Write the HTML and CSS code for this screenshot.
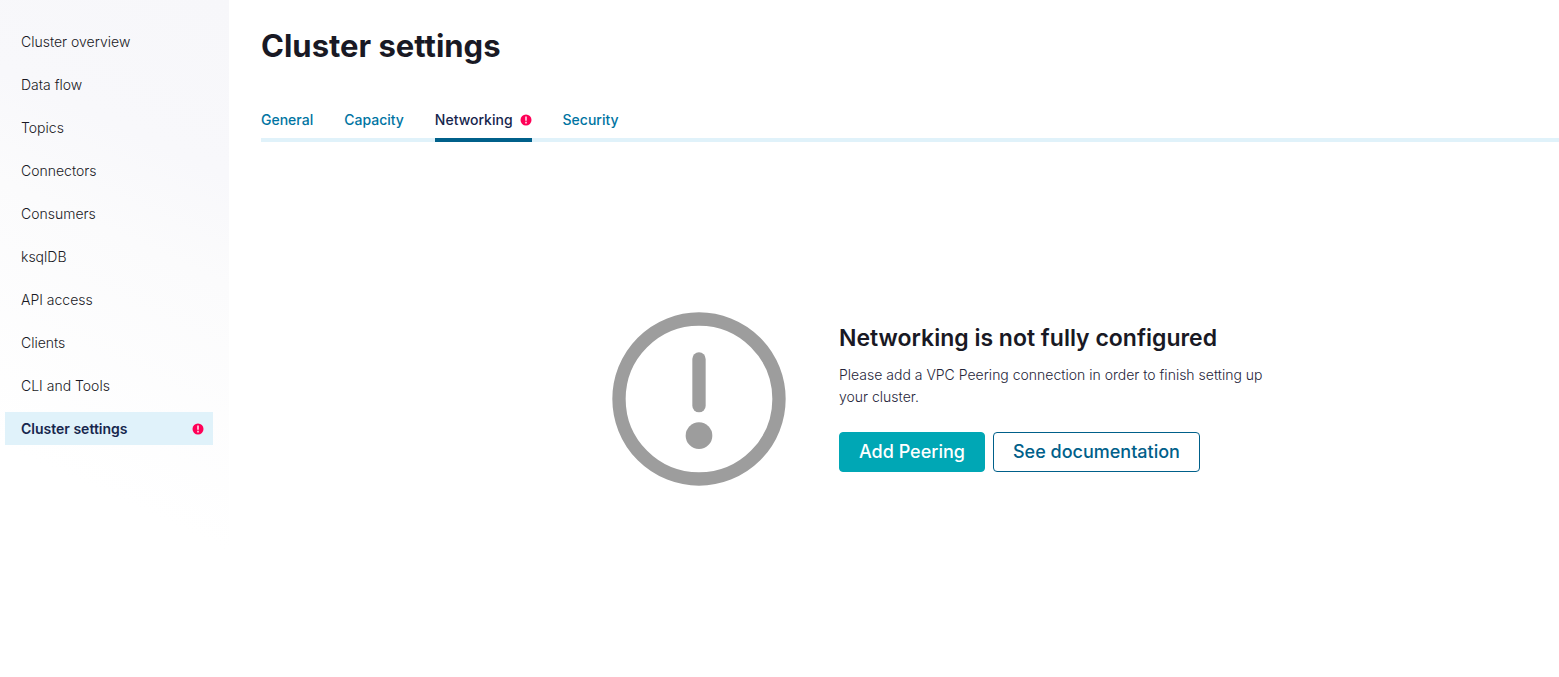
FILE: index.html
```html
<!DOCTYPE html>
<html lang="en">
<head>
<meta charset="utf-8">
<meta name="viewport" content="width=device-width, initial-scale=1">
<title>Cluster settings</title>
<link rel="stylesheet" href="styles.css">
</head>
<body>
<div class="app">
  <nav class="sidebar" aria-label="Cluster">
    <a class="nav-item" href="#overview">Cluster overview</a>
    <a class="nav-item" href="#flow">Data flow</a>
    <a class="nav-item" href="#topics">Topics</a>
    <a class="nav-item" href="#connectors">Connectors</a>
    <a class="nav-item" href="#consumers">Consumers</a>
    <a class="nav-item" href="#ksqldb">ksqlDB</a>
    <a class="nav-item" href="#api">API access</a>
    <a class="nav-item" href="#clients">Clients</a>
    <a class="nav-item" href="#cli">CLI and Tools</a>
    <a class="nav-item nav-item-active" href="#settings" aria-current="page">Cluster settings
      <svg class="alert" viewBox="0 0 12 12" aria-hidden="true"><circle cx="6" cy="6" r="5.5" fill="#ff0057"/><path d="M6 2.5v4.2M6 7.7v1.8" stroke="#ffc4d9" stroke-width="1.8"/></svg>
    </a>
  </nav>
  <main class="main">
    <h1 class="title">Cluster settings</h1>
    <div class="tabs" aria-label="Settings sections">
      <a class="tab" href="#general">General</a>
      <a class="tab" href="#capacity">Capacity</a>
      <a class="tab tab-active" href="#networking" aria-current="true">Networking
        <svg class="alert" viewBox="0 0 12 12" aria-hidden="true"><circle cx="6" cy="6" r="5.5" fill="#ff0057"/><path d="M6 2.5v4.2M6 7.7v1.8" stroke="#ffc4d9" stroke-width="1.8"/></svg>
      </a>
      <a class="tab" href="#security">Security</a>
    </div>
    <section class="notice">
      <svg class="notice-icon" viewBox="0 0 30 30" aria-hidden="true"><circle cx="15" cy="15" r="12" fill="none" stroke="#9d9d9d" stroke-width="2"/><path d="M15 9v7" stroke="#9d9d9d" stroke-width="2" stroke-linecap="round"/><circle cx="15" cy="20.5" r="2" fill="#9d9d9d"/></svg>
      <div class="notice-body">
        <h2 class="notice-title">Networking is not fully configured</h2>
        <p class="notice-text">Please add a VPC Peering connection in order to finish setting up your cluster.</p>
        <div class="actions">
          <button class="button button-primary" type="button">Add Peering</button>
          <button class="button" type="button">See documentation</button>
        </div>
      </div>
    </section>
  </main>
</div>
</body>
</html>
```
FILE: styles.css
```css
* {
  box-sizing: border-box;
}

body {
  margin: 0;
  background: #fff;
  color: #191924;
  font-family: Inter, sans-serif;
  font-size: 14px;
}

.app {
  display: flex;
  min-height: 100vh;
}

.sidebar {
  display: flex;
  flex-direction: column;
  flex: 0 0 229px;
  gap: 10px;
  padding: 25px 16px 0 5px;
  background: linear-gradient(205deg, #f7f7fa 0, #f8f8fb 160px, #fbfbfc 260px, #fff 500px);
}

.nav-item {
  display: flex;
  align-items: center;
  justify-content: space-between;
  padding: 0 9px 0 16px;
  color: #191924;
  font-weight: 300;
  line-height: 33px;
  text-decoration: none;
}

.nav-item-active {
  background: #e0f2fa;
  color: #16264d;
  font-weight: 600;
}

.alert {
  display: block;
  width: 12px;
  height: 12px;
}

.main {
  display: flex;
  flex: 1;
  flex-direction: column;
  min-width: 0;
  padding-left: 32px;
}

.title {
  margin: 26px 0 43px;
  font-size: 31px;
  font-weight: 700;
  line-height: 40px;
}

.tabs {
  display: flex;
  gap: 31px;
  box-shadow: inset 0 -4px #e0f2fa;
}

.tab {
  display: flex;
  align-items: center;
  gap: 7px;
  padding-bottom: 7px;
  border-bottom: 4px solid transparent;
  color: #0074a2;
  font-weight: 500;
  line-height: 22px;
  text-decoration: none;
}

.tab-active {
  border-color: #00608a;
  color: #16264d;
}

.notice {
  display: flex;
  align-items: center;
  justify-content: center;
  gap: 40px;
  padding: 157px 0 40px 58px;
}

.notice-icon {
  flex: none;
  width: 200px;
  height: 200px;
}

.notice-body {
  flex: 0 1 440px;
  padding-bottom: 4px;
}

.notice-title {
  margin: 0 0 10px;
  font-size: 23px;
  font-weight: 600;
  line-height: 32px;
}

.notice-text {
  margin: 0;
  color: #26263a;
  font-weight: 300;
  line-height: 22px;
}

.actions {
  display: flex;
  gap: 8px;
  margin-top: 24px;
}

.button {
  height: 40px;
  padding: 0 19px 2px;
  border: 1px solid #00608a;
  border-radius: 4px;
  background: #fff;
  color: #00608a;
  font-family: inherit;
  font-size: 18px;
  font-weight: 500;
}

.button-primary {
  border-color: #00a7b5;
  background: #00a7b5;
  color: #fff;
}
```
